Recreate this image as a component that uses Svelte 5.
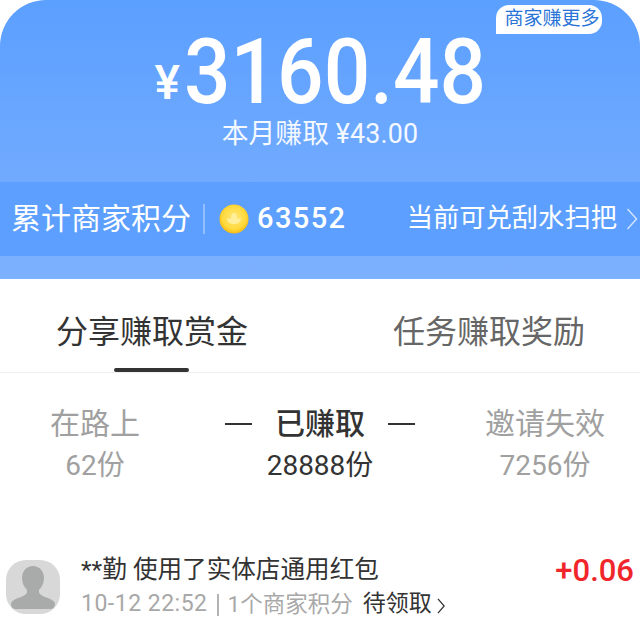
<script>
  const stats = [
    { label: '在路上', value: '62份' },
    { label: '已赚取', value: '28888份', active: true },
    { label: '邀请失效', value: '7256份' }
  ];
</script>

<div class="page">
  <header class="hero">
    <div class="badge">商家赚更多</div>
    <div class="summary">
      <div class="amount"><span class="yen">¥</span><span class="big">3160.48</span></div>
      <div class="month">本月赚取 <span class="num">¥43.00</span></div>
    </div>
    <div class="band">
      <span class="band-title">累计商家积分</span>
      <i class="sep"></i>
      <svg class="coin" viewBox="0 0 30 30" width="30" height="30">
        <defs>
          <radialGradient id="c" cx="50%" cy="45%" r="55%">
            <stop offset="0" stop-color="#ffe97a" />
            <stop offset="0.75" stop-color="#ffd83a" />
            <stop offset="1" stop-color="#f7b90f" />
          </radialGradient>
        </defs>
        <circle cx="15" cy="15" r="14.5" fill="url(#c)" />
        <path d="M8 14c2 1 3 1 4 0 0-3 1-5 3-5s3 2 3 5c1 1 2 1 4 0 0 4-3 6-7 6s-7-2-7-6z" fill="#ffee9a" />
      </svg>
      <span class="points">63552</span>
      <span class="spacer"></span>
      <span class="redeem">当前可兑刮水扫把</span>
      <svg class="chev" viewBox="0 0 12 24" width="12" height="24"><path d="M1.5 2l9 10-9 10" fill="none" stroke="#cfe1ff" stroke-width="1.5" /></svg>
    </div>
  </header>

  <nav class="tabs">
    <div class="tab on">分享赚取赏金</div>
    <div class="tab">任务赚取奖励</div>
  </nav>

  <section class="stats">
    {#each stats as s}
      <div class="stat" class:active={s.active}>
        <div class="stat-label">
          {#if s.active}<i class="dash"></i>{/if}
          <span>{s.label}</span>
          {#if s.active}<i class="dash"></i>{/if}
        </div>
        <div class="stat-value">{s.value}</div>
      </div>
    {/each}
  </section>

  <article class="row">
    <svg class="avatar" viewBox="0 0 54 54" width="54" height="54">
      <rect width="54" height="54" rx="20" fill="#d8d8d8" />
      <path d="M27 6c6.500 0 11 5 11 12 0 5-2 9-5 12v2c0 2 2 3 6 5 6 2 10 4 10 7 0 3-2 5-5 5H10c-3 0-5-2-5-5 0-3 4-5 10-7 4-2 6-3 6-5v-2c-3-3-5-7-5-12 0-7 4.500-12 11-12z" fill="#a9abaa" />
    </svg>
    <div class="body">
      <div class="title">**勤 使用了实体店通用红包</div>
      <div class="meta"><span class="date">10-12 22:52</span><i class="bar"></i><span class="points-text">1个商家积分</span><span class="pending">待领取</span>
        <svg viewBox="0 0 10 18" width="9" height="16"><path d="M1 1l7 8-7 8" fill="none" stroke="#333" stroke-width="1.4" /></svg>
      </div>
    </div>
    <div class="delta">+0.06</div>
  </article>
</div>

<style>
  :global(body) {
    margin: 0;
    background: #fff;
  }
  .page {
    width: 640px;
    height: 639px;
    overflow: hidden;
    background: #fff;
    font-family: "Roboto", "Noto Sans CJK SC", sans-serif;
  }
  .hero {
    position: relative;
    height: 279px;
    border-radius: 46px 46px 0 0;
    background: linear-gradient(#5b9fff, #7db1ff);
    color: #fff;
  }
  .badge {
    position: absolute;
    top: 5px;
    right: 38px;
    width: 106px;
    height: 29px;
    line-height: 27px;
    box-sizing: border-box;
    padding-left: 6px;
    text-align: center;
    font-size: 19px;
    color: #2a74d8;
    background: #fff;
    border-radius: 13px 13px 13px 0;
  }
  .summary {
    height: 182px;
    display: flex;
    flex-direction: column;
    align-items: center;
  }
  .amount {
    display: flex;
    align-items: flex-start;
    height: 114px;
    padding-top: 32px;
    box-sizing: border-box;
    white-space: nowrap;
  }
  .yen {
    font-size: 48px;
    font-weight: 500;
    line-height: 60px;
    margin-top: 21px;
  }
  .big {
    font-size: 91px;
    font-weight: 500;
    line-height: 80px;
    margin-left: 4px;
    margin-right: -34px;
    transform: scaleX(0.9);
    transform-origin: left center;
  }
  .month {
    font-size: 26.800px;
    line-height: 34px;
    color: #f4f8ff;
    margin-top: 3px;
  }
  .num { letter-spacing: 0.2px; }
  .band {
    height: 74px;
    display: flex;
    align-items: center;
    background: #5c9fff;
    padding: 0 2px 0 11px;
  }
  .band-title {
    font-size: 30px;
    margin-bottom: 7px;
  }
  .sep {
    width: 2px;
    height: 30px;
    margin: 0 14px 0 12px;
    background: #93bdff;
  }
  .coin { flex: none; }
  .points {
    margin-left: 8px;
    font-size: 29px;
    font-weight: 500;
    letter-spacing: 1.4px;
    margin-bottom: 2px;
  }
  .spacer { flex: 1; }
  .redeem {
    font-size: 26.300px;
    margin-right: 9px;
    margin-bottom: 7px;
  }
  .tabs {
    height: 94px;
    box-sizing: border-box;
    border-bottom: 1px solid #eeeeee;
    display: flex;
  }
  .tab {
    position: relative;
    flex: none;
    font-size: 32px;
    line-height: 106px;
    color: #666;
  }
  .tab:first-child { margin-left: 56px; }
  .tab:last-child { margin-left: 145px; }
  .tab.on { color: #333; }
  .tab.on::after {
    content: "";
    position: absolute;
    left: 58px;
    width: 75px;
    height: 4px;
    bottom: 0;
    border-radius: 2px;
    background: #333;
  }
  .stats {
    display: grid;
    grid-template-columns: 190px 260px 190px;
    padding-top: 30px;
    height: 177px;
    box-sizing: border-box;
    text-align: center;
  }
  .stat-label {
    font-size: 30px;
    line-height: 42px;
    color: #a0a0a0;
    display: flex;
    justify-content: center;
    align-items: center;
    gap: 23px;
  }
  .stat-value {
    font-size: 28px;
    line-height: 42px;
    color: #a0a0a0;
  }
  .stat.active .stat-label {
    color: #333;
    font-weight: 500;
  }
  .stat.active .stat-value { color: #333; }
  .dash {
    width: 27px;
    height: 2px;
    background: #333;
  }
  .row {
    display: flex;
    align-items: flex-start;
    padding: 0 6px;
    margin-top: 2px;
  }
  .avatar {
    flex: none;
    margin-top: 8px;
  }
  .body {
    flex: 1;
    margin-left: 21px;
    margin-top: 2px;
  }
  .title {
    font-size: 24.600px;
    line-height: 32px;
    color: #333;
  }
  .meta {
    font-size: 23px;
    line-height: 34px;
    margin-top: 1px;
    color: #a8a8a8;
    white-space: nowrap;
    display: flex;
    align-items: center;
  }
  .date { letter-spacing: 0.5px; }
  .points-text { font-size: 22.500px; }
  .bar {
    width: 2px;
    height: 22px;
    margin: 2px 9px 0 9px;
    background: #b4b4b4;
  }
  .pending { color: #333; margin-left: 10px; }
  .meta svg { margin-left: 5px; margin-top: 3px; }
  .delta {
    font-size: 31px;
    line-height: 36px;
    font-weight: 500;
    color: #f0262b;
    margin-top: 1px;
  }
</style>
